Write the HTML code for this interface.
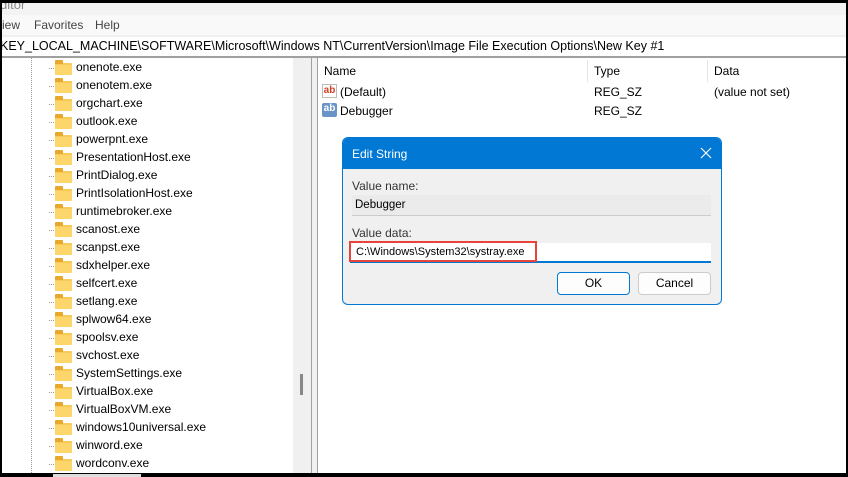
<!DOCTYPE html>
<html><head><style>
*{margin:0;padding:0;box-sizing:border-box}
body{width:848px;height:477px;overflow:hidden;background:#000;font-family:"Liberation Sans",sans-serif;font-size:12px;color:#000;position:relative}
.abs{position:absolute}
.t{white-space:nowrap}
.fold{position:absolute;width:17px;height:12px;background:#f8c957;border-radius:1px}
.fold:before{content:"";position:absolute;left:0;top:-3px;width:8px;height:4px;background:#e8a82c;border-radius:1px 1px 0 0}
.fold:after{content:"";position:absolute;left:0;top:2px;width:17px;height:10px;background:#fcd66a;border-radius:1px}
</style></head><body>
<div class="abs" style="left:2px;top:3px;width:844px;height:470px;background:#fff"></div>
<div class="abs" style="left:2px;top:3px;width:844px;height:12px;background:#f3f3f3;overflow:hidden"><span class="t abs" style="left:-2px;top:-6px;color:#888;font-size:13px">ditor</span></div>
<div class="abs" style="left:2px;top:15px;width:844px;height:20px;background:#f9f9f9"></div>
<div class="abs t" style="left:2px;top:18px;color:#444">iew</div>
<div class="abs t" style="left:34px;top:18px;color:#444">Favorites</div>
<div class="abs t" style="left:95px;top:18px;color:#444">Help</div>
<div class="abs" style="left:2px;top:35px;width:844px;height:2px;background:#f0f0f0"></div>
<div class="abs t" style="left:0;top:39px;font-size:12.5px">KEY_LOCAL_MACHINE\SOFTWARE\Microsoft\Windows NT\CurrentVersion\Image File Execution Options\New Key #1</div>
<div class="abs" style="left:2px;top:56px;width:844px;height:2px;background:#a0a0a0"></div>
<div class="abs" style="left:31px;top:58px;height:415px;border-left:1px dotted #999"></div>
<div class="abs" style="left:293px;top:58px;width:18px;height:415px;background:#f0f0f0"></div>
<div class="abs" style="left:300px;top:374px;width:3px;height:21px;background:#888"></div>
<div class="abs" style="left:311px;top:58px;width:1px;height:415px;background:#a0a0a0"></div>
<div class="abs" style="left:312px;top:58px;width:5px;height:415px;background:#f0f0f0"></div>
<div class="abs" style="left:317px;top:58px;width:1px;height:415px;background:#a0a0a0"></div>
<div id="tree"></div>
<script>
var n=["onenote.exe","onenotem.exe","orgchart.exe","outlook.exe","powerpnt.exe","PresentationHost.exe","PrintDialog.exe","PrintIsolationHost.exe","runtimebroker.exe","scanost.exe","scanpst.exe","sdxhelper.exe","selfcert.exe","setlang.exe","splwow64.exe","spoolsv.exe","svchost.exe","SystemSettings.exe","VirtualBox.exe","VirtualBoxVM.exe","windows10universal.exe","winword.exe","wordconv.exe"];
var h="";for(var i=0;i<n.length;i++){var y=67+i*18;
h+='<div class="abs" style="left:49px;top:'+(y+1)+'px;width:5px;border-top:1px dotted #999"></div><div class="fold" style="left:55px;top:'+(y-4)+'px"></div><div class="abs t" style="left:76px;top:'+(y-7)+'px">'+n[i]+'</div>';}
h+='<div class="abs" style="left:53px;top:474px;width:88px;height:3px;background:#ddd"></div>';
document.getElementById("tree").innerHTML=h;
</script>
<div class="abs" style="left:587px;top:60px;width:1px;height:22px;background:#e5e5e5"></div>
<div class="abs" style="left:707px;top:60px;width:1px;height:22px;background:#e5e5e5"></div>
<div class="abs t" style="left:324px;top:64px">Name</div>
<div class="abs t" style="left:594px;top:64px">Type</div>
<div class="abs t" style="left:714px;top:64px">Data</div>
<div class="abs" style="left:322px;top:84px;width:15px;height:14px;border:1px solid #bbb;background:#fff;color:#d04020;font-size:10px;font-weight:bold;line-height:11px;text-align:center">ab</div>
<div class="abs t" style="left:340px;top:85px">(Default)</div>
<div class="abs t" style="left:594px;top:85px">REG_SZ</div>
<div class="abs t" style="left:714px;top:85px">(value not set)</div>
<div class="abs" style="left:322px;top:103px;width:15px;height:14px;background:#6a94c8;color:#fff;font-size:10px;font-weight:bold;line-height:12px;text-align:center;border-radius:2px">ab</div>
<div class="abs t" style="left:340px;top:104px">Debugger</div>
<div class="abs t" style="left:594px;top:104px">REG_SZ</div>
<div class="abs" style="left:342px;top:137px;width:380px;height:168px;background:#f0f0f0;border:1px solid #0078d4;border-radius:6px;overflow:hidden">
<div style="height:31px;background:#0078d4;color:#fff;font-size:12px;padding:9px 0 0 9px">Edit String</div>
<svg class="abs" style="right:9px;top:9px" width="12" height="12"><path d="M1 1L11 11M11 1L1 11" stroke="#fff" stroke-width="1.2"/></svg>
<div class="abs t" style="left:9px;top:41px;color:#333">Value name:</div>
<div class="abs" style="left:9px;top:57px;width:359px;height:21px;background:#ebebeb;border-bottom:1px solid #ccc;padding:4px 3px;font-size:11.5px">Debugger</div>
<div class="abs t" style="left:9px;top:88px;color:#333">Value data:</div>
<div class="abs" style="left:7px;top:105px;width:361px;height:20px;background:#fff;border-bottom:2px solid #0078d4"></div>
<div class="abs t" style="left:6px;top:103px;width:188px;height:21px;border:2px solid #e8443a;padding:3px 0 0 5px;font-size:11px">C:\Windows\System32\systray.exe</div>
<div class="abs" style="left:214px;top:134px;width:73px;height:23px;background:#fdfdfd;border:1px solid #0078d4;border-radius:4px;text-align:center;line-height:21px">OK</div>
<div class="abs" style="left:295px;top:134px;width:73px;height:23px;background:#fdfdfd;border:1px solid #ccc;border-radius:4px;text-align:center;line-height:21px">Cancel</div>
</div>
</body></html>
